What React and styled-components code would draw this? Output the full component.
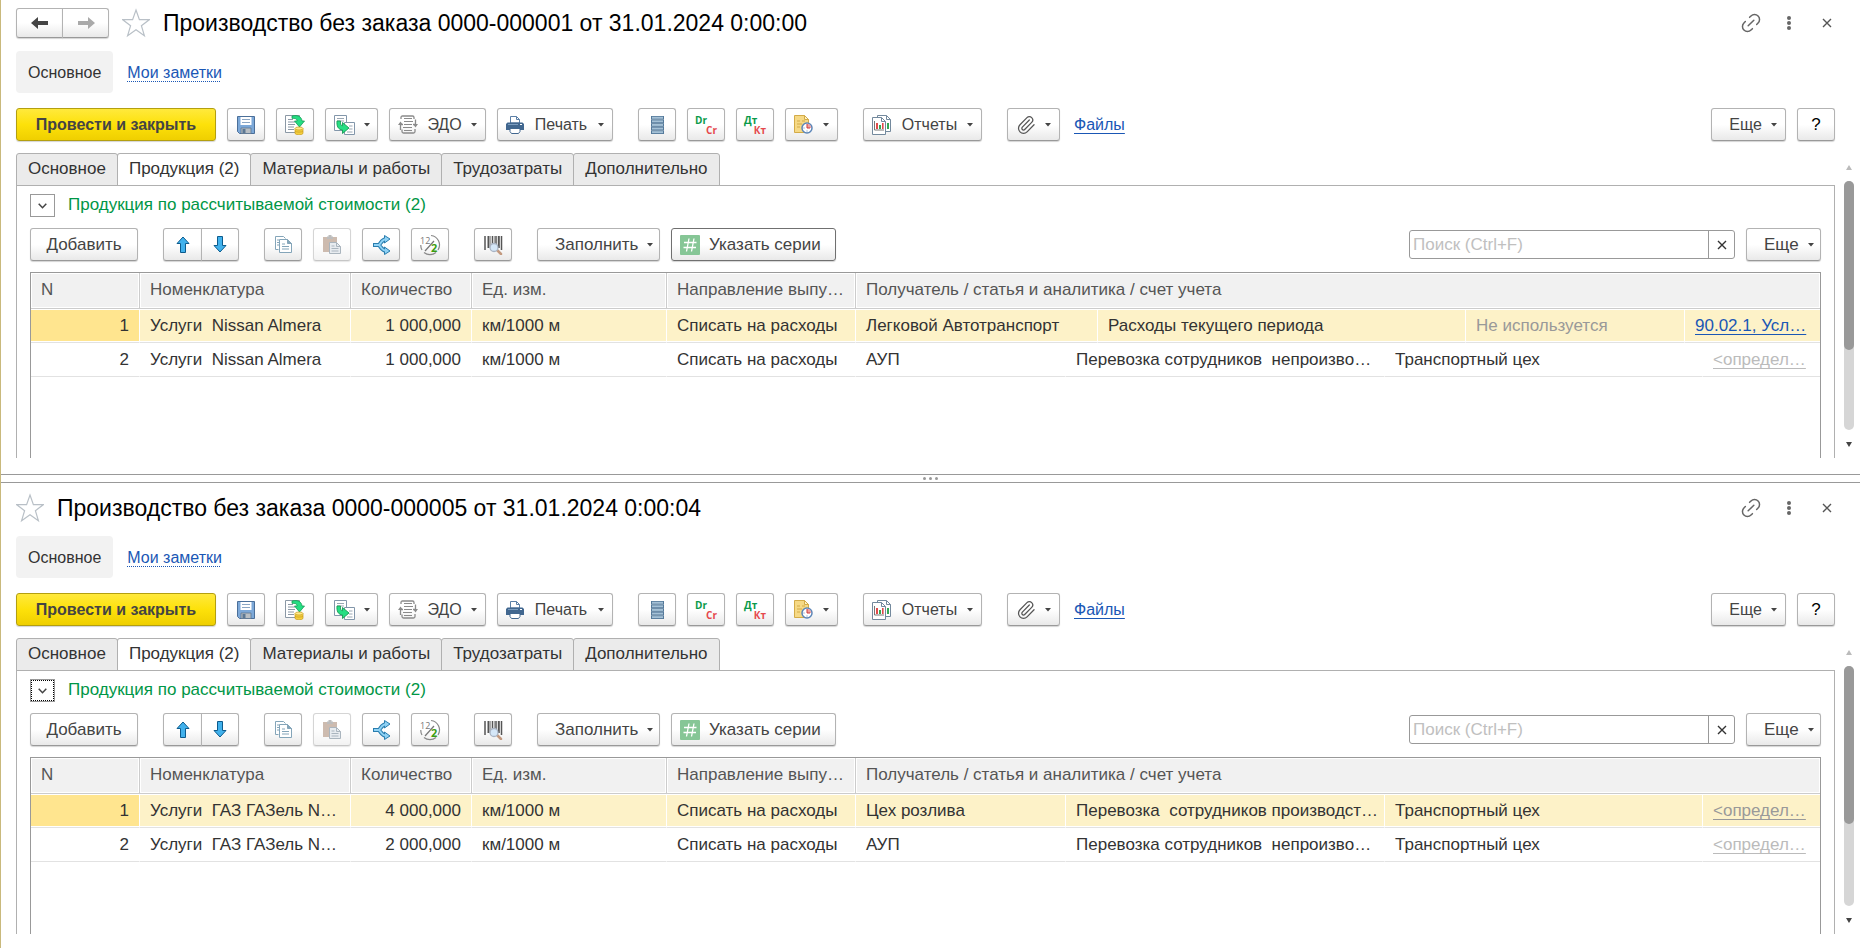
import { useState } from "react";
import styled, { createGlobalStyle, css } from "styled-components";
import { Link2, Paperclip } from "lucide-react";

const GlobalStyle = createGlobalStyle`
  * {
    box-sizing: border-box;
  }
  body {
    margin: 0;
    background: #fff;
    color: #333;
    font-family: "Liberation Sans", Arial, sans-serif;
    font-size: 16px;
    line-height: 20px;
  }
  button, input {
    font: inherit;
    color: inherit;
  }
  svg {
    display: block;
    flex-shrink: 0;
  }
`;

const Workspace = styled.div`
  display: grid;
  grid-template-rows: 474fr 9px 465fr;
  min-height: 100vh;
  border-left: 1px solid #c9b97c;
`;
const Pane = styled.section`
  display: flex;
  flex-direction: column;
  min-width: 0;
  padding: ${({ $second }) => ($second ? "10px 0 14px 15px" : "8px 0 16px 15px")};
`;
const Splitter = styled.div`
  display: flex;
  align-items: center;
  justify-content: center;
  gap: 3px;
  border-top: 1px solid #999;
  border-bottom: 1px solid #999;
  i {
    width: 3px;
    height: 3px;
    border-radius: 50%;
    background: #999;
  }
`;

const TitleBar = styled.header`
  display: flex;
  align-items: center;
  height: 30px;
  padding-right: 14px;
  h1 {
    flex: 1;
    margin: 0 0 0 13px;
    font-size: 23px;
    line-height: 28px;
    font-weight: 400;
    color: #000;
    white-space: nowrap;
  }
`;
const IconButton = styled.button`
  display: flex;
  align-items: center;
  justify-content: center;
  padding: 0;
  border: 0;
  background: none;
  color: #666;
`;
const WindowTools = styled.div`
  display: flex;
  ${IconButton} {
    width: 38px;
  }
`;
const Sections = styled.nav`
  display: flex;
  align-items: center;
  gap: 14px;
  height: 42px;
  margin: 13px 0 15px;
  > * {
    padding: 12px 0 10px;
  }
  span {
    padding-left: 12px;
    padding-right: 12px;
    border-radius: 4px;
    background: #f2f2f2;
  }
`;
const Link = styled.a`
  color: ${({ $muted }) => $muted || "#1a57b5"};
  text-decoration: underline ${({ $dotted }) => ($dotted ? "dotted" : "solid")}
    1px;
  text-underline-offset: 3px;
  text-decoration-skip-ink: none;
`;

const Toolbar = styled.div`
  display: flex;
  align-items: center;
  gap: 25px;
  height: 33px;
`;
const MainToolbar = styled(Toolbar)`
  padding-right: 25px;
`;
const TableToolbar = styled(Toolbar)`
  font-size: 17px;
`;
const Group = styled.div`
  display: flex;
  align-items: center;
  gap: ${({ $gap }) => $gap || 11}px;
  margin-left: ${({ $end }) => ($end ? "auto" : 0)};
`;
const Button = styled.button`
  display: flex;
  align-items: center;
  justify-content: ${({ $menu, $left }) =>
    $menu ? "space-between" : $left ? "flex-start" : "center"};
  gap: 9px;
  width: ${({ $w }) => $w || 38}px;
  height: 33px;
  padding: 0 ${({ $menu, $left }) => ($menu || $left ? 8 : 0)}px;
  border: 1px solid ${({ $focused }) => ($focused ? "#707070" : "#b3b3b3")};
  border-bottom-color: ${({ $focused }) => ($focused ? "#707070" : "#999")};
  border-radius: 3px;
  background: linear-gradient(#fff 50%, #e9e9e9);
  box-shadow: 0 1px 1px #d4d4d4;
  color: #444;
  white-space: nowrap;
  &:disabled {
    opacity: 0.55;
  }
  ${({ $primary }) =>
    $primary &&
    css`
      border-color: #b39f10;
      background: linear-gradient(#ffe93c, #fde10a 50%, #efcf00);
      font-weight: 700;
    `}
`;
const HelpButton = styled(Button)`
  color: #000;
  font-size: 17px;
`;
const Joined = styled.div`
  display: flex;
  ${Button}:first-child {
    border-radius: 3px 0 0 3px;
  }
  ${Button}:last-child {
    margin-left: -1px;
    border-radius: 0 3px 3px 0;
  }
`;
const NavPair = styled(Joined)`
  margin-right: 13px;
  ${Button} {
    width: 47px;
    height: 30px;
  }
`;

const Body = styled.div`
  display: flex;
  flex: 1;
  gap: 9px;
  margin-top: 12px;
  padding-right: 6px;
`;
const Content = styled.div`
  display: flex;
  flex-direction: column;
  flex: 1;
  min-width: 0;
`;
const TabList = styled.div`
  display: flex;
  height: 33px;
  margin-bottom: -1px;
  font-size: 17px;
`;
const Tab = styled.button`
  padding: 0 11px 2px;
  border: 1px solid #b0b0b0;
  border-radius: 3px 3px 0 0;
  border-bottom-color: ${({ $active }) => ($active ? "#fff" : "#b0b0b0")};
  background: ${({ $active }) => ($active ? "#fff" : "#ebebeb")};
  white-space: nowrap;
  & + & {
    margin-left: -1px;
  }
`;
const TabPanel = styled.div`
  display: flex;
  flex-direction: column;
  flex: 1;
  gap: 11px;
  padding: 8px 13px 0;
  border: 1px solid #b0b0b0;
  border-bottom: 0;
`;
const GroupTitle = styled.div`
  display: flex;
  align-items: center;
  gap: 13px;
  height: 23px;
  color: #009646;
  font-size: 17px;
  span {
    padding-bottom: 2px;
  }
`;
const Collapse = styled.button`
  display: flex;
  align-items: center;
  justify-content: center;
  width: 25px;
  height: 23px;
  padding: 0;
  border: 1px solid #999;
  background: #fff;
  outline: ${({ $focused }) => ($focused ? "1px dotted #000" : "none")};
  outline-offset: -2px;
`;
const Search = styled.div`
  display: flex;
  width: 326px;
  height: 29px;
  border: 1px solid #999;
  border-radius: 3px;
  input {
    flex: 1;
    min-width: 0;
    padding: 0 3px;
    border: 0;
    background: none;
    outline: none;
    &::placeholder {
      color: #c0c0c0;
    }
  }
  button {
    width: 26px;
    border-left: 1px solid #999;
  }
`;

const Grid = styled.div`
  flex: 1;
  border: 1px solid #999;
  border-bottom: 0;
  font-size: 17px;
`;
const Table = styled.table`
  width: 100%;
  table-layout: fixed;
  border-spacing: 0;
  th,
  td {
    padding: 0 10px;
    overflow: hidden;
    text-align: left;
    white-space: pre;
  }
  th {
    height: 36px;
    padding-bottom: 2px;
    border-right: 1px solid #ccc;
    border-bottom: 1px solid #ccc;
    background: #f1f1f1;
    box-shadow: inset 0 0 0 1px #fff;
    color: #555;
    font-weight: 400;
  }
  th:last-child {
    border-right: 0;
  }
`;
const Row = styled.tr`
  td {
    height: 34px;
    border-right: 1px solid #fff;
    border-bottom: 1px solid #e2e2e2;
    box-shadow: inset 0 1px #fff, inset 0 -1px #fff;
    background: ${({ $selected }) => ($selected ? "#fdf2c8" : "#fff")};
  }
  td:last-child {
    border-right: 0;
  }
  td:first-child {
    background: ${({ $selected }) => ($selected ? "#ffe58f" : "#fff")};
  }
  td.num {
    text-align: right;
  }
  td.muted {
    color: #999;
  }
`;

const Scroll = styled.div`
  display: flex;
  flex-direction: column;
  width: 10px;
  > span {
    display: flex;
    align-items: center;
    justify-content: center;
    height: 28px;
  }
`;
const Track = styled.div`
  flex: 1;
  border-radius: 5px;
  background: #d6d6d6;
`;
const Thumb = styled.div`
  height: ${({ $size }) => $size}%;
  border-radius: 5px;
  background: #999;
`;

const Caret = () => (
  <svg width="6" height="4" viewBox="0 0 6 4">
    <path d="M0 0h6L3 3.5z" fill="#444" />
  </svg>
);
const Cross = ({ color = "#555" }) => (
  <svg width="10" height="10" viewBox="0 0 10 10">
    <path d="M1 1l8 8M9 1L1 9" stroke={color} strokeWidth="1.4" />
  </svg>
);
const Star = () => (
  <svg width="28" height="30" viewBox="1 0 28 30">
    <path
      d="M15 2l3.4 9.6h10.1l-8.1 6.1 3 10L15 21.8l-8.4 5.9 3-10-8.1-6.1h10.1z"
      fill="none"
      stroke="#b9c0c7"
      strokeWidth="1.2"
    />
  </svg>
);
const ArrowIcon = ({ color, flip }) => (
  <svg width="18" height="14" viewBox="0 0 18 14">
    <path
      d={flip ? "M18 7l-7-6v4H1v4h10v4z" : "M0 7l7-6v4h10v4H7v4z"}
      fill={color}
    />
  </svg>
);
const SaveIcon = () => (
  <svg width="18" height="18" viewBox="0 0 18 18">
    <path d="M.5.5h17v17h-15l-2-2z" fill="#7ca8d8" stroke="#4b6f99" />
    <path d="M3.5 1h11v8h-11z" fill="#fff" />
    <path d="M5 3.5h8M5 6.5h8" stroke="#8ba6c4" />
    <path d="M4 12h10v5.5H4z" fill="#b9bfc4" stroke="#5e7690" strokeWidth=".8" />
    <path d="M5.5 13h3v4h-3z" fill="#5c7894" />
  </svg>
);
const PostIcon = () => (
  <svg width="20" height="20" viewBox="0 0 20 20">
    <path d="M.5.5h14v17H.5z" fill="#fff" stroke="#8b98a5" />
    <path d="M3 4.5h5M3 7h7M3 9.5h7M3 12h6M3 14.5h6" stroke="#8b98a5" />
    <path
      d="M7 1c6-1.4 9.600.8 10 5h2.500l-5 6-5-6h2.700C12 3.800 10 3 7 3.400z"
      fill="#25de83"
      stroke="#169a55"
      strokeWidth=".8"
    />
    <path
      d="M10 13.500v5c1 1.800 7 1.800 8 0v-5z"
      fill="#f4cf3e"
      stroke="#c79a1c"
      strokeWidth=".7"
    />
    <path d="M10 16c1 1.500 7 1.500 8 0" fill="none" stroke="#c79a1c" strokeWidth=".7" />
    <ellipse
      cx="14"
      cy="13.500"
      rx="4"
      ry="1.500"
      fill="#ffeb8a"
      stroke="#c79a1c"
      strokeWidth=".7"
    />
  </svg>
);
const CreateIcon = () => (
  <svg width="21" height="20" viewBox="0 0 21 20">
    <path d="M.5.5h12v15H.5z" fill="#fff" stroke="#8296aa" />
    <path d="M3 3.5h7M3 6h7M3 8.5h3" stroke="#9aa7b3" />
    <path d="M10.5 7.5h10v12h-10z" fill="#fff" stroke="#8296aa" />
    <path d="M15 11h3.5M15 14h3.5M13 17h5.5" stroke="#9aa7b3" />
    <path
      d="M3 6c-.5 5 1 8.500 5.500 9v3.500l6.500-5.500-6.500-5.500v3.300C6.800 10.500 6.200 9 6.500 6z"
      fill="#25de83"
      stroke="#169a55"
      strokeWidth=".9"
    />
  </svg>
);
const EdoIcon = () => (
  <svg width="20" height="19" viewBox="0 0 20 19" fill="none" stroke="#8b8b8b">
    <path
      d="M3 4V2.500Q3 1 4.500 1h10Q16 1 16 2.500V4M4 14.500v2Q4 18 5.500 18h10Q17 18 17 16.500V14"
      strokeWidth="1.300"
    />
    <path d="M6 3.500h8M6 6.500h9M6 9.500h8M5 12.500h9M6 15.500h8" />
    <path d="M2.500 15V9.500H5M17.500 4.500v5H15" strokeWidth="1.300" />
    <path
      d="M0 10l2.500-3.500L5 10zM15 9l2.500 3.500L20 9z"
      fill="#8b8b8b"
      stroke="none"
    />
  </svg>
);
const PrintIcon = () => (
  <svg width="18" height="18" viewBox="0 0 18 18">
    <path d="M4.500 7V.5h6l3 3V7z" fill="#fff" stroke="#5b7fa6" />
    <path d="M10.500.5v3h3" fill="none" stroke="#5b7fa6" />
    <path d="M1.500 6.500h15L18 8v6H0V8z" fill="#41678f" />
    <path d="M2 8.500h10" stroke="#7b9dc0" />
    <path d="M14 8.500h2" stroke="#fff" />
    <path d="M4 12.500h10v3l-1.500 2h-7l-1.500-2z" fill="#fff" stroke="#41678f" />
  </svg>
);
const ListIcon = () => (
  <svg width="13" height="18" viewBox="0 0 13 18">
    {[0, 3.6, 7.2, 10.8, 14.4].map((y) => (
      <g key={y}>
        <rect y={y} width="13" height="3.6" fill="#54799a" />
        <rect x="1" y={y + 0.8} width="11" height="1.9" fill="#a5c1d6" />
      </g>
    ))}
  </svg>
);
const Ledger = ({ top, bottom }) => (
  <svg
    width="28"
    height="30"
    viewBox="0 0 28 30"
    fontFamily="Open Sans, sans-serif"
    fontSize="10"
    fontWeight="700"
  >
    <text x="3" y="14" fill="#0a9a4a">
      {top}
    </text>
    <text x="25" y="24" fill="#e5484d" textAnchor="end">
      {bottom}
    </text>
  </svg>
);
const HistoryIcon = () => (
  <svg width="19" height="19" viewBox="0 0 19 19">
    <path d="M.5.5h10l4 4v13H.5z" fill="#f6d985" stroke="#d3ab48" />
    <path d="M10.500.5v4h4z" fill="#fff3c4" stroke="#d3ab48" />
    <path d="M3 6h3M8 6h3M3 9h5M3 12h3" stroke="#d3ab48" />
    <circle cx="13" cy="13" r="5" fill="#fff" stroke="#5c86b8" strokeWidth="1.5" />
    <path d="M13 13V8.800a4.200 4.200 0 0 1 4.200 4.200z" fill="#f0a0a0" />
    <path d="M13 9v4h3" fill="none" stroke="#cf3b3b" />
    <path d="M9.500 13h1M13 16.500v-1" stroke="#5c86b8" />
  </svg>
);
const ReportIcon = () => (
  <svg width="20" height="20" viewBox="0 0 20 20">
    <path d="M5.500.5h9l4 4v12h-13z" fill="#fff" stroke="#73899d" />
    <path d="M14.500.5v4h4" fill="none" stroke="#73899d" />
    <path d="M16 8v6" stroke="#35a853" strokeWidth="2" />
    <path d="M.5 2.500h9l4 4v13H.5z" fill="#fff" stroke="#73899d" />
    <path d="M9.500 2.500v4h4" fill="none" stroke="#73899d" />
    <path d="M2.500 6v9H12" fill="none" stroke="#777" />
    <path d="M5 8v6" stroke="#e04b4b" strokeWidth="2" />
    <path d="M8 10v4" stroke="#35a853" strokeWidth="2" />
    <path d="M10.800 8v6" stroke="#e04b4b" strokeWidth="1.6" />
  </svg>
);
const MoveIcon = ({ down }) => (
  <svg width="14" height="17" viewBox="0 0 14 17">
    <path
      d={down ? "M7 16L1 9.500h3.500v-9h5v9H13z" : "M7 1L1 7.500h3.500v9h5v-9H13z"}
      fill="#41b1ec"
      stroke="#0c5b8d"
    />
  </svg>
);
const CopyIcon = () => (
  <svg width="17" height="18" viewBox="0 0 17 18" stroke="#84a5b9">
    <path d="M3.500 13.500h-3V.5h8l2 2" fill="#fff" />
    <path d="M2 4h2M2 6.500h2M2 9h2" />
    <path d="M4.500 3.500h8l4 4v9h-12z" fill="#fff" />
    <path d="M12.500 3.500v4h4z" fill="#84a5b9" />
    <path d="M7 8h3M7 10.500h7M7 13h7" />
  </svg>
);
const PasteIcon = () => (
  <svg width="18" height="19" viewBox="0 0 18 19">
    <path d="M0 2h14v15H0z" fill="#a5846f" />
    <path d="M4 4V1.500h1.500V0h3v1.500H10V4z" fill="#888" />
    <path d="M6.500 7.500h7l4 4v7h-11z" fill="#d6dee5" stroke="#66798a" />
    <path
      d="M13.500 7.500v4h4M8.500 11h3M8.500 13.500h7M8.500 16h7"
      fill="none"
      stroke="#66798a"
    />
  </svg>
);
const SplitIcon = () => (
  <svg width="19" height="20" viewBox="0 0 19 20" fill="none">
    <path
      d="M1 10h5.500c2 0 2.500-6 8.500-6M6.500 10c2 0 2.500 6 8.500 6"
      stroke="#2a7dae"
      strokeWidth="4"
    />
    <path
      d="M12.500.5l5.500 3.500-5.500 4zM12.500 12l5.500 4-5.500 3.500z"
      fill="#8fd2f5"
      stroke="#2a7dae"
    />
    <path
      d="M2 10h4.500c2 0 2.500-6 8.500-6M6.500 10c2 0 2.500 6 8.500 6"
      stroke="#8fd2f5"
      strokeWidth="2"
    />
  </svg>
);
const HalfIcon = () => (
  <svg
    width="22"
    height="22"
    viewBox="0 0 22 22"
    fontFamily="Open Sans, sans-serif"
  >
    <path
      d="M12 1.500a9.500 9.500 0 0 1 7 14.500M17 18.500A9.500 9.500 0 0 1 5 18.500M3 16a9.500 9.500 0 0 1-1.200-5"
      fill="none"
      stroke="#8a8a8a"
      strokeWidth="1.2"
    />
    <path d="M6 17L15 7" stroke="#777" strokeWidth="1.2" />
    <text x="1" y="10" fontSize="9" fill="#777">
      12
    </text>
    <text x="12" y="18" fontSize="11" fontWeight="700" fill="#3a9d10">
      2
    </text>
  </svg>
);
const BarcodeIcon = () => (
  <svg width="19" height="20" viewBox="0 0 19 20">
    <path
      d="M1 1v14M8.500 1v12M12 1v12M17.500 1v14"
      stroke="#555"
      strokeWidth="1.5"
    />
    <path d="M4.500 1v12M14.800 1v12" stroke="#555" strokeWidth="2" />
    <path d="M6.500 1v12M10.500 1v8" stroke="#aaa" />
    <path
      d="M13 15l4 4"
      stroke="#c39a80"
      strokeWidth="2.5"
      strokeLinecap="round"
    />
    <circle
      cx="10"
      cy="12.500"
      r="4"
      fill="#d5e7f8"
      stroke="#a9b4c4"
      strokeWidth="1.3"
    />
  </svg>
);
const SeriesIcon = () => (
  <svg width="20" height="20" viewBox="0 0 20 20">
    <rect width="20" height="20" rx="1" fill="#86c696" />
    <path
      d="M9 3.500L6.500 16.500M14 3.500l-2.500 13M4 7.500h12.500M3.500 12.500H16"
      stroke="#fff"
      strokeWidth="1.3"
    />
  </svg>
);

// the receiver area splits at different places depending on the row
const WIDTHS = [109, 211, 121, 195, 189, 210, 32, 287, 81, 219, 18, 117];
const EXPENSE = [2, 2, 1, 2];
const ANALYTIC = [1, 2, 3, 1];
const HEADERS = [
  "N",
  "Номенклатура",
  "Количество",
  "Ед. изм.",
  "Направление выпу…",
  "Получатель / статья и аналитика / счет учета",
];
const TABS = [
  "Основное",
  "Продукция (2)",
  "Материалы и работы",
  "Трудозатраты",
  "Дополнительно",
];

const DOCS = [
  {
    id: "doc1",
    title: "Производство без заказа 0000-000001 от 31.01.2024 0:00:00",
    thumb: 68,
    rows: [
      {
        name: "Услуги  Nissan Almera",
        qty: "1 000,000",
        spans: EXPENSE,
        receiver: "Легковой Автотранспорт",
        item: "Расходы текущего периода",
        analytic: "Не используется",
        account: "90.02.1, Усл…",
      },
      {
        name: "Услуги  Nissan Almera",
        qty: "1 000,000",
        spans: ANALYTIC,
        receiver: "АУП",
        item: "Перевозка сотрудников  непроизво…",
        analytic: "Транспортный цех",
      },
    ],
  },
  {
    id: "doc5",
    title: "Производство без заказа 0000-000005 от 31.01.2024 0:00:04",
    thumb: 66,
    second: true,
    rows: [
      {
        name: "Услуги  ГАЗ ГАЗель N…",
        qty: "4 000,000",
        spans: ANALYTIC,
        receiver: "Цех розлива",
        item: "Перевозка  сотрудников производст…",
        analytic: "Транспортный цех",
      },
      {
        name: "Услуги  ГАЗ ГАЗель N…",
        qty: "2 000,000",
        spans: ANALYTIC,
        receiver: "АУП",
        item: "Перевозка сотрудников  непроизво…",
        analytic: "Транспортный цех",
      },
    ],
  },
];

function CommandBar() {
  return (
    <MainToolbar>
      <Group>
        <Button $w={200} $primary>
          Провести и закрыть
        </Button>
        <Button aria-label="Записать">
          <SaveIcon />
        </Button>
        <Button aria-label="Провести">
          <PostIcon />
        </Button>
        <Button $w={53} $menu aria-label="Создать на основании">
          <CreateIcon />
          <Caret />
        </Button>
        <Button $w={97} $menu>
          <EdoIcon />
          ЭДО
          <Caret />
        </Button>
        <Button $w={116} $menu>
          <PrintIcon />
          Печать
          <Caret />
        </Button>
      </Group>
      <Group>
        <Button aria-label="Регистры">
          <ListIcon />
        </Button>
        <Button>
          <Ledger top="Dr" bottom="Cr" />
        </Button>
        <Button>
          <Ledger top="Дт" bottom="Кт" />
        </Button>
        <Button $w={53} $menu aria-label="История">
          <HistoryIcon />
          <Caret />
        </Button>
      </Group>
      <Button $w={119} $menu>
        <ReportIcon />
        Отчеты
        <Caret />
      </Button>
      <Group $gap={14}>
        <Button $w={53} $menu aria-label="Присоединенные файлы">
          <Paperclip size={20} strokeWidth={1.5} color="#555" />
          <Caret />
        </Button>
        <Link href="#files">Файлы</Link>
      </Group>
      <Group $end>
        <Button $w={75} $menu>
          <i />
          Еще
          <Caret />
        </Button>
        <HelpButton>?</HelpButton>
      </Group>
    </MainToolbar>
  );
}

function TableBar({ focused }) {
  const [search, setSearch] = useState("");
  return (
    <TableToolbar>
      <Button $w={108}>Добавить</Button>
      <Joined>
        <Button $w={39} aria-label="Вверх">
          <MoveIcon />
        </Button>
        <Button aria-label="Вниз">
          <MoveIcon down />
        </Button>
      </Joined>
      <Group>
        <Button aria-label="Скопировать">
          <CopyIcon />
        </Button>
        <Button aria-label="Вставить" disabled>
          <PasteIcon />
        </Button>
        <Button aria-label="Разделить">
          <SplitIcon />
        </Button>
        <Button aria-label="Разбить">
          <HalfIcon />
        </Button>
      </Group>
      <Button aria-label="Штрихкод">
        <BarcodeIcon />
      </Button>
      <Group>
        <Button $w={123} $menu>
          <i />
          Заполнить
          <Caret />
        </Button>
        <Button $w={165} $left $focused={focused}>
          <SeriesIcon />
          Указать серии
        </Button>
      </Group>
      <Group $end>
        <Search>
          <input
            aria-label="Поиск"
            placeholder="Поиск (Ctrl+F)"
            value={search}
            onChange={(e) => setSearch(e.target.value)}
          />
          <IconButton aria-label="Очистить" onClick={() => setSearch("")}>
            <Cross color="#333" />
          </IconButton>
        </Search>
        <Button $w={75} $menu>
          <i />
          Еще
          <Caret />
        </Button>
      </Group>
    </TableToolbar>
  );
}

function ProductTable({ rows }) {
  const [selected, setSelected] = useState(0);
  return (
    <Grid>
      <Table>
        <colgroup>
          {WIDTHS.map((w, idx) => (
            <col key={idx} width={w} />
          ))}
        </colgroup>
        <thead>
          <tr>
            {HEADERS.map((el, idx) => (
              <th key={el} colSpan={idx === 5 ? 7 : 1}>
                {el}
              </th>
            ))}
          </tr>
        </thead>
        <tbody>
          {rows.map((el, idx) => (
            <Row
              key={idx}
              $selected={selected === idx}
              onClick={() => setSelected(idx)}
            >
              <td className="num">{idx + 1}</td>
              <td>{el.name}</td>
              <td className="num">{el.qty}</td>
              <td>км/1000 м</td>
              <td>Списать на расходы</td>
              <td colSpan={el.spans[0]}>{el.receiver}</td>
              <td colSpan={el.spans[1]}>{el.item}</td>
              <td
                colSpan={el.spans[2]}
                className={el.account ? "muted" : undefined}
              >
                {el.analytic}
              </td>
              <td colSpan={el.spans[3]}>
                {el.account ? (
                  <Link href="#account">{el.account}</Link>
                ) : (
                  <Link
                    href="#account"
                    $muted={selected === idx ? "#999" : "#bbb"}
                  >
                    {"<определ…"}
                  </Link>
                )}
              </td>
            </Row>
          ))}
        </tbody>
      </Table>
    </Grid>
  );
}

function DocumentPane({ doc }) {
  const [tab, setTab] = useState(1);
  return (
    <Pane $second={doc.second}>
      <TitleBar>
        {!doc.second && (
          <NavPair>
            <Button aria-label="Назад">
              <ArrowIcon color="#444" />
            </Button>
            <Button aria-label="Вперед">
              <ArrowIcon color="#aaa" flip />
            </Button>
          </NavPair>
        )}
        <IconButton aria-label="В избранное">
          <Star />
        </IconButton>
        <h1>{doc.title}</h1>
        <WindowTools>
          <IconButton aria-label="Ссылка">
            <Link2 size={24} strokeWidth={1.5} transform="rotate(-45)" />
          </IconButton>
          <IconButton aria-label="Меню">
            <svg width="4" height="14" viewBox="0 0 4 14" fill="#666">
              <circle cx="2" cy="2" r="2" />
              <circle cx="2" cy="7" r="2" />
              <circle cx="2" cy="12" r="2" />
            </svg>
          </IconButton>
          <IconButton aria-label="Закрыть">
            <Cross />
          </IconButton>
        </WindowTools>
      </TitleBar>
      <Sections>
        <span>Основное</span>
        <Link href="#notes" $dotted>
          Мои заметки
        </Link>
      </Sections>
      <CommandBar />
      <Body>
        <Content>
          <TabList role="tablist">
            {TABS.map((el, idx) => (
              <Tab
                key={el}
                role="tab"
                aria-selected={tab === idx}
                $active={tab === idx}
                onClick={() => setTab(idx)}
              >
                {el}
              </Tab>
            ))}
          </TabList>
          <TabPanel role="tabpanel">
            <GroupTitle>
              <Collapse aria-label="Свернуть" $focused={doc.second}>
                <svg width="9" height="6" viewBox="0 0 9 6">
                  <path
                    d="M.7.7l3.800 4L8.300.7"
                    fill="none"
                    stroke="#444"
                    strokeWidth="1.5"
                  />
                </svg>
              </Collapse>
              <span>Продукция по рассчитываемой стоимости (2)</span>
            </GroupTitle>
            <TableBar focused={!doc.second} />
            <ProductTable rows={doc.rows} />
          </TabPanel>
        </Content>
        <Scroll>
          <span>
            <svg width="6" height="5" viewBox="0 0 6 5">
              <path d="M0 5h6L3 0z" fill="#bbb" />
            </svg>
          </span>
          <Track>
            <Thumb $size={doc.thumb} />
          </Track>
          <span>
            <svg width="6" height="5" viewBox="0 0 6 5">
              <path d="M0 0h6L3 5z" fill="#444" />
            </svg>
          </span>
        </Scroll>
      </Body>
    </Pane>
  );
}

export default function App() {
  return (
    <>
      <GlobalStyle />
      <Workspace>
        <DocumentPane doc={DOCS[0]} />
        <Splitter>
          <i />
          <i />
          <i />
        </Splitter>
        <DocumentPane doc={DOCS[1]} />
      </Workspace>
    </>
  );
}
